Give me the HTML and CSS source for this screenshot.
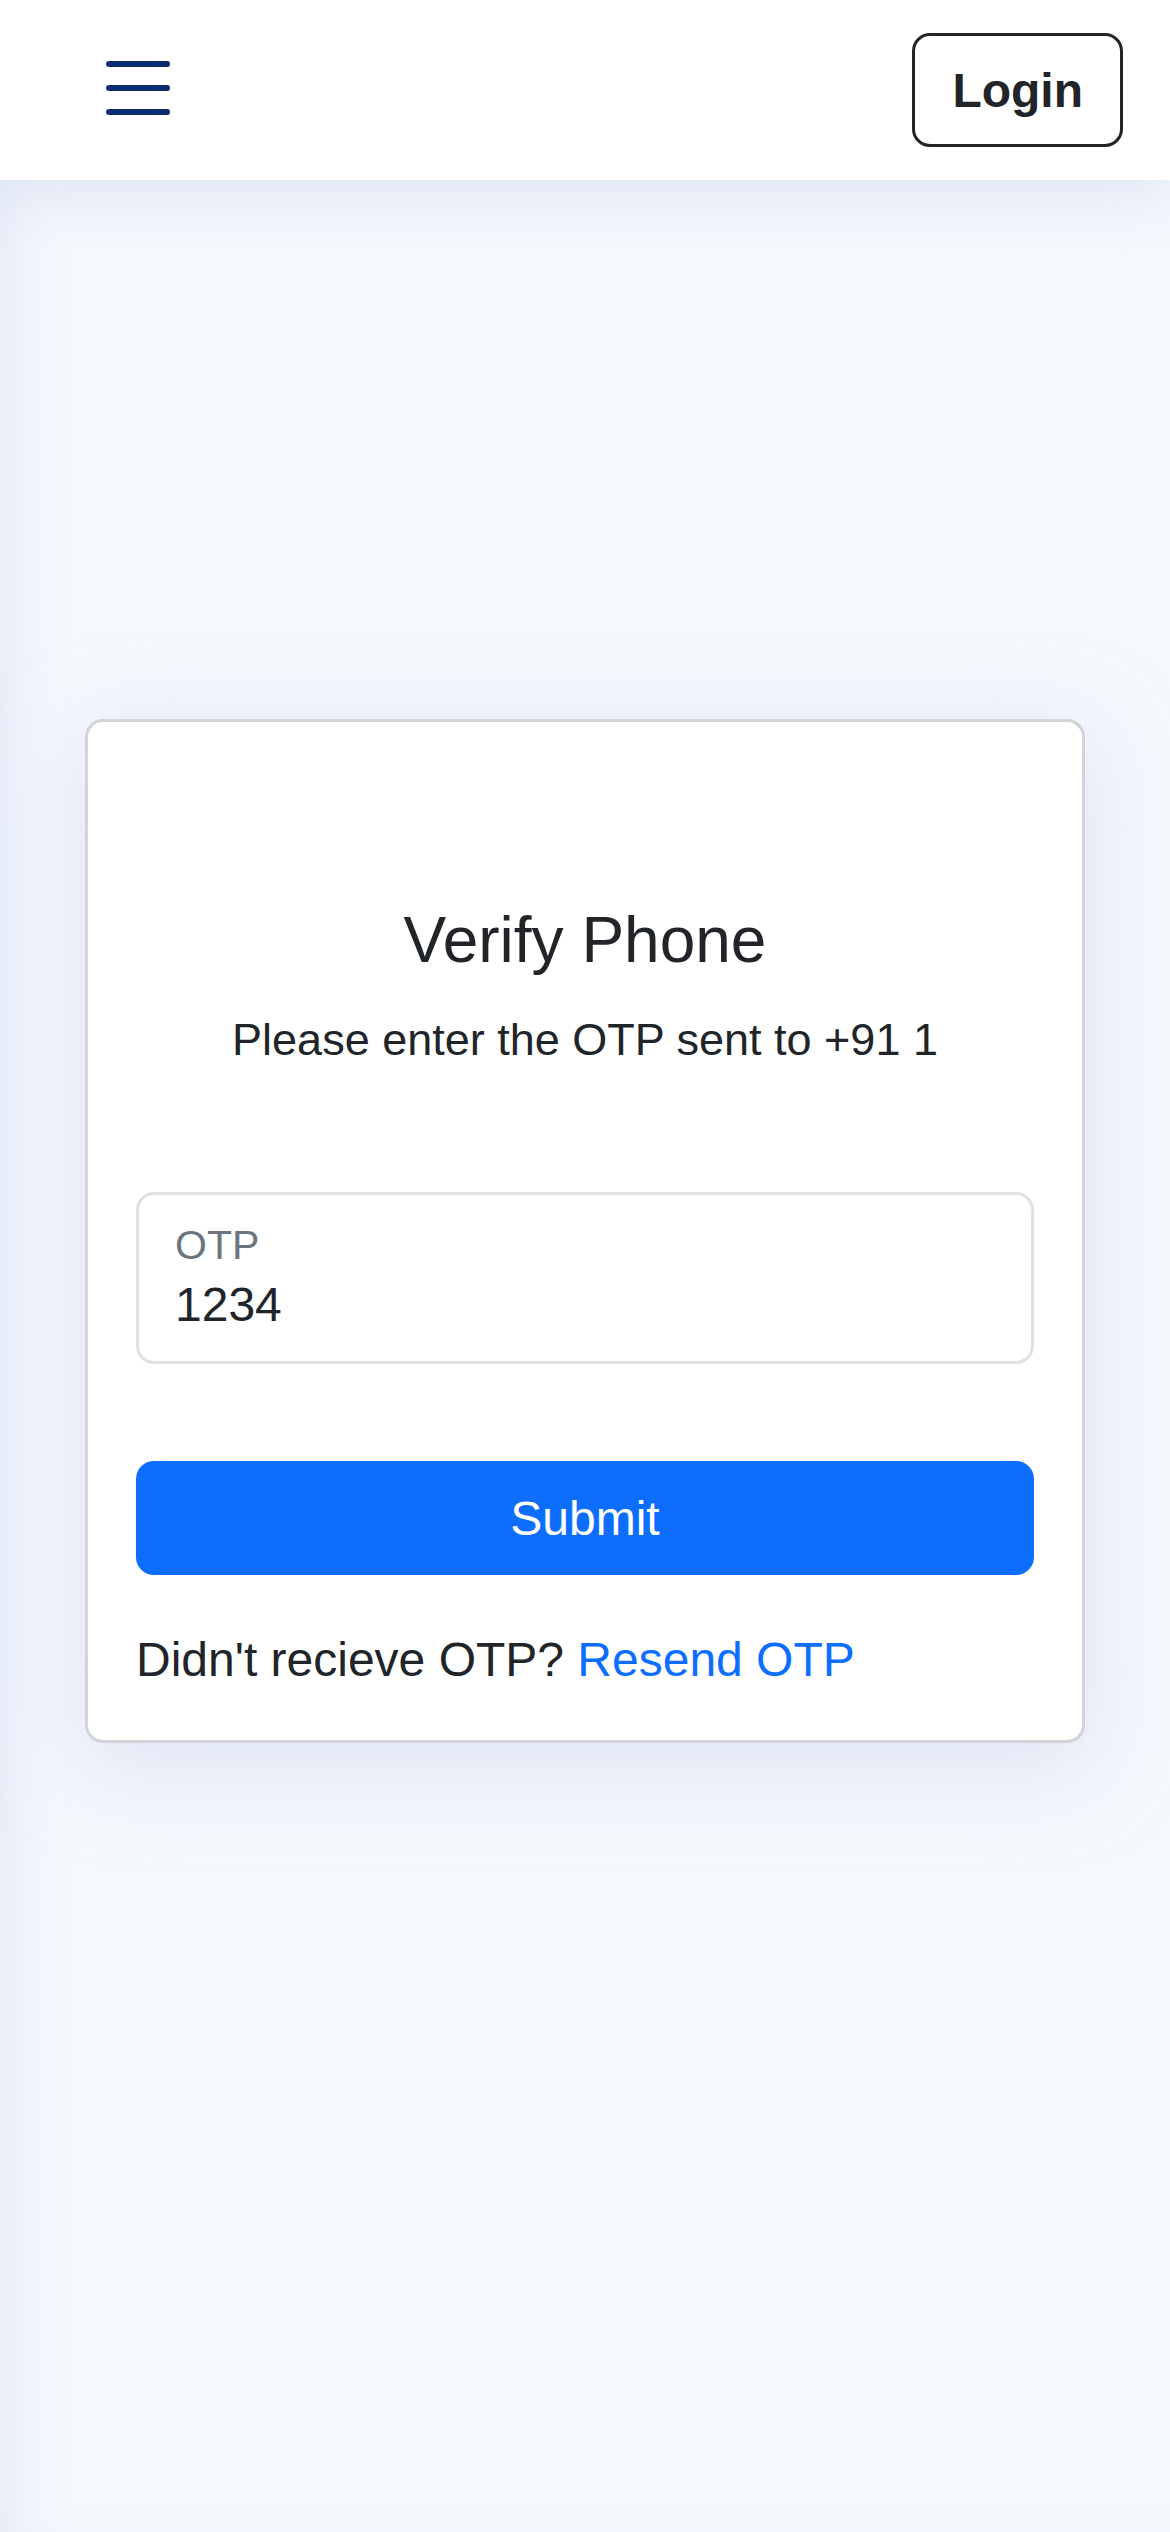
FILE: index.html
```html
<!DOCTYPE html>
<html lang="en">
<head>
<meta charset="utf-8">
<title>Verify Phone</title>
<link rel="stylesheet" href="styles.css">
</head>
<body>
<header class="topbar">
  <button class="menu-btn" aria-label="Menu">
    <svg width="64" height="60" viewBox="0 0 64 60">
      <g stroke="#0b2d6b" stroke-width="6" stroke-linecap="round">
        <line x1="3" y1="3" x2="61" y2="3"/>
        <line x1="3" y1="27" x2="61" y2="27"/>
        <line x1="3" y1="51" x2="61" y2="51"/>
      </g>
    </svg>
  </button>
  <button class="login-btn">Login</button>
</header>
<main class="page">
  <section class="card">
    <h1 class="card-title">Verify Phone</h1>
    <p class="card-sub">Please enter the OTP sent to +91 1</p>
    <div class="field">
      <label class="field-label" for="otp">OTP</label>
      <input class="field-input" id="otp" type="text" value="1234">
    </div>
    <button class="submit-btn">Submit</button>
    <p class="resend">Didn't recieve OTP? <a href="#" class="resend-link">Resend OTP</a></p>
  </section>
</main>
</body>
</html>
```
FILE: styles.css
```css
* { box-sizing: border-box; }
html, body { margin: 0; padding: 0; }
body {
  font-family: "Liberation Sans", Arial, sans-serif;
  color: #212529;
  background: #f5f8fd;
  min-height: 2532px;
  box-shadow: inset 40px 0 50px -30px rgba(210, 220, 242, 0.55);
}
.topbar {
  position: relative;
  z-index: 2;
  height: 180px;
  background: #ffffff;
  display: flex;
  align-items: center;
  justify-content: space-between;
  padding: 0 47px 0 106px;
  box-shadow: 0 12px 60px rgba(190, 202, 232, 0.45);
}
.menu-btn {
  background: none;
  border: 0;
  padding: 0;
  margin-top: 2px;
  display: flex;
}
.login-btn {
  height: 114px;
  padding: 0 37px;
  background: transparent;
  border: 3px solid #212529;
  border-radius: 18px;
  font-family: "Liberation Sans", Arial, sans-serif;
  font-weight: 700;
  font-size: 48px;
  color: #212529;
}
.page {
  padding: 539px 85px 0;
}
.card {
  background: #ffffff;
  border: 3px solid #d4d4d6;
  border-radius: 18px;
  padding: 180px 48px 44px;
  box-shadow: 0 20px 90px rgba(195, 205, 235, 0.5);
}
.card-title {
  margin: 0 0 27px;
  font-size: 64px;
  line-height: 1.2;
  font-weight: 400;
  text-align: center;
}
.card-sub {
  margin: 0;
  font-size: 45px;
  line-height: 1.5;
  text-align: center;
}
.field {
  margin-top: 119px;
  height: 172px;
  border: 3px solid #dee2e6;
  border-radius: 18px;
  padding: 30px 36px 0;
  display: flex;
  flex-direction: column;
}
.field-label {
  font-size: 41px;
  line-height: 1;
  color: #6c757d;
  margin-bottom: 14px;
}
.field-input {
  border: 0;
  outline: none;
  padding: 0;
  margin: 0;
  height: 48px;
  font-family: "Liberation Sans", Arial, sans-serif;
  font-size: 48px;
  line-height: 1;
  color: #212529;
  background: transparent;
}
.submit-btn {
  display: block;
  width: 100%;
  margin-top: 97px;
  height: 114px;
  border: 0;
  border-radius: 18px;
  background: #0d6efd;
  color: #ffffff;
  font-family: "Liberation Sans", Arial, sans-serif;
  font-size: 48px;
}
.resend {
  margin: 49px 0 0;
  font-size: 48px;
  line-height: 72px;
}
.resend-link {
  color: #0d6efd;
  text-decoration: none;
}
```
